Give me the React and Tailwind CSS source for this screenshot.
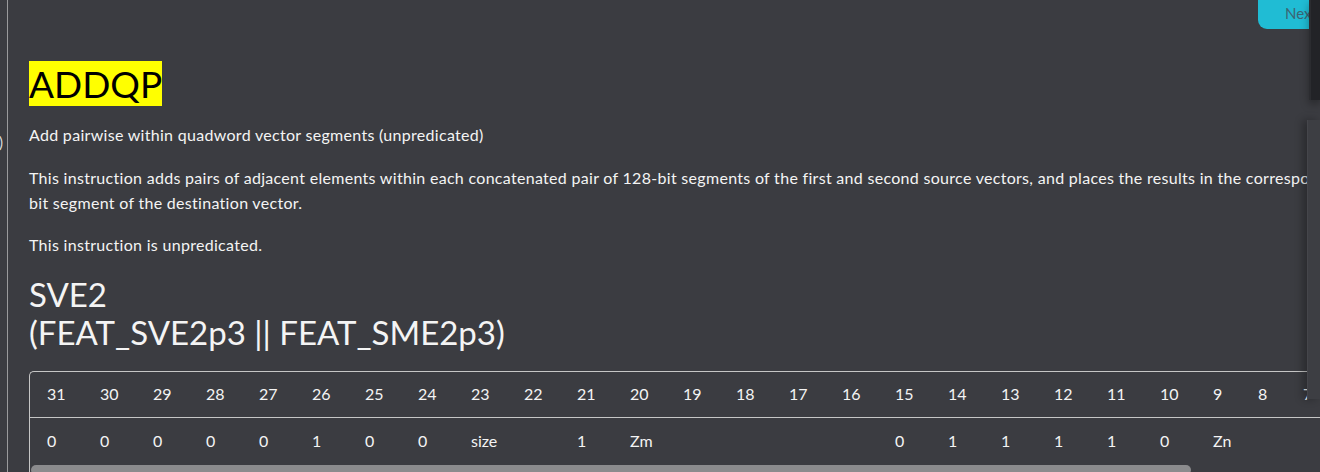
import React from "react";

const bits = [31, 30, 29, 28, 27, 26, 25, 24, 23, 22, 21, 20, 19, 18, 17, 16, 15, 14, 13, 12, 11, 10, 9, 8, 7, 6, 5, 4, 3, 2, 1, 0];

// encoding row: [label, number of columns]
const fields = [
  ["0", 1], ["0", 1], ["0", 1], ["0", 1], ["0", 1], ["1", 1], ["0", 1], ["0", 1],
  ["size", 2], ["1", 1], ["Zm", 5],
  ["0", 1], ["1", 1], ["1", 1], ["1", 1], ["1", 1], ["0", 1],
  ["Zn", 5], ["Zda", 5],
];

const colWidth = (b) => (b >= 10 ? 53 : 45);

function Encoding() {
  let at = 0;
  return (
    <div className="mt-[20px] w-[1640px] border-t border-l border-[#c6c6c6] rounded-tl-[5px] text-[16px] text-[#f4f4f4]">
      <div className="flex h-[46px] pt-[10px] leading-6 border-b border-[#c6c6c6]">
        {bits.map((b) => (
          <div key={b} className={b >= 10 ? "w-[53px] shrink-0 pl-[17px]" : "w-[45px] shrink-0 pl-[17px]"}>
            {b}
          </div>
        ))}
      </div>
      <div className="flex h-[47px] pt-[11px] leading-6">
        {fields.map(([label, span], i) => {
          const w = bits.slice(at, at + span).reduce((s, b) => s + colWidth(b), 0);
          at += span;
          return (
            <div key={i} className="shrink-0 pl-[17px]" style={{ width: w }}>
              {label}
            </div>
          );
        })}
      </div>
      <div className="ml-px h-[10px] w-[1160px] rounded-[5px] bg-[#8b8b8d]" />
    </div>
  );
}

export default function App() {
  return (
    <div className="relative flex h-[472px] w-[1320px] overflow-hidden bg-[#3b3c41] font-[Lato,sans-serif] text-[#f4f4f4]">
      {/* edge of the left pane, scrolled away */}
      <div className="w-[7px] shrink-0 overflow-hidden pt-[130px] text-[15px] leading-6">
        <div className="-ml-[1px] text-[#dcdcdc]">)</div>
      </div>
      <div className="w-px shrink-0 bg-[#9a9a9c]" />

      <div className="min-w-0 flex-1 pl-[21px] pt-[62px]">
        <h1 className="text-[37px] leading-[44px] font-normal">
          <span className="bg-[#ffff00] text-black">ADDQP</span>
        </h1>
        <p className="mt-[16px] text-[16px] leading-[25px] tracking-[0.3px]">
          Add pairwise within quadword vector segments (unpredicated)
        </p>
        <p className="mt-[18px] whitespace-nowrap text-[16px] leading-[25px] tracking-[0.3px]">
          This instruction adds pairs of adjacent elements within each concatenated pair of 128-bit segments of the first and second source vectors, and places the results in the corresponding 128-
          <br />
          bit segment of the destination vector.
        </p>
        <p className="mt-[17px] text-[16px] leading-[25px] tracking-[0.3px]">This instruction is unpredicated.</p>
        <h2 className="mt-[18px] text-[33px] leading-[38px] font-normal">
          SVE2
          <br />
          (FEAT_SVE2p3 || FEAT_SME2p3)
        </h2>
        <Encoding />
      </div>

      {/* floating controls on the right */}
      <div className="absolute left-[1258px] top-0 h-[29px] w-[80px] rounded-bl-[9px] bg-[#20bcd4] pl-[27px] pt-[1px] text-[15px] leading-6 text-[#3c6573]">
        Next
      </div>
      <div className="absolute right-0 top-0 h-[100px] w-[11px] border-l-2 border-[#2b2c30] bg-[#222327] shadow-[0_4px_8px_rgba(0,0,0,0.35)]" />
      <div className="absolute right-0 top-[120px] h-[279px] w-[13px] border-l border-[#45464b] bg-[#3d3e43] shadow-[-4px_0_8px_rgba(0,0,0,0.3)]" />
    </div>
  );
}
